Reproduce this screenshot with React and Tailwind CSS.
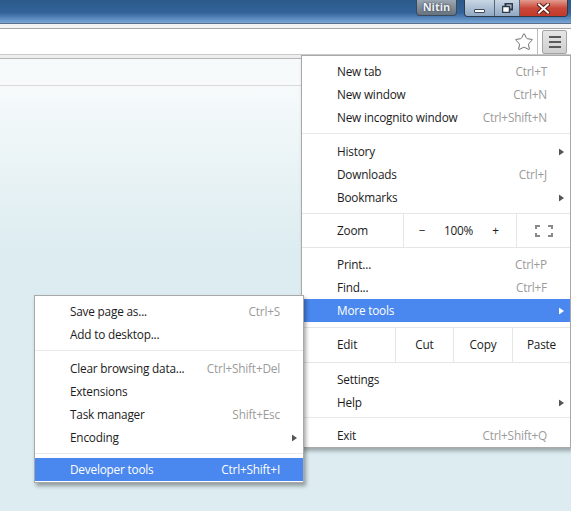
import { Star } from 'lucide-react';

const FONT = { fontFamily: '"Open Sans", "Noto Sans", sans-serif' };

function Arrow({ light }) {
  return (
    <svg width="5" height="7" viewBox="0 0 5 7" className="absolute right-[6px] top-1/2 -translate-y-1/2">
      <path d="M0 0 L5 3.5 L0 7 Z" fill={light ? '#ffffff' : '#555555'} />
    </svg>
  );
}

function Item({ label, shortcut, arrow, active }) {
  return (
    <div
      className={`relative h-[23px] flex items-center justify-between pl-[35px] pr-[23px] text-[11.8px] tracking-[-0.2px] ${
        active ? 'bg-[#4a87ee] text-white' : 'text-[#1b1b1b]'
      }`}
    >
      <span>{label}</span>
      {shortcut && <span className={active ? 'text-white' : 'text-[#9b9b9b]'}>{shortcut}</span>}
      {arrow && <Arrow light={active} />}
    </div>
  );
}

function Sep({ top = 4, bottom = 6 }) {
  return (
    <div className={`${top === 3 ? 'mt-[3px]' : 'mt-[4px]'} ${bottom === 4 ? 'mb-[4px]' : 'mb-[6px]'} h-px bg-[#e9e9e9]`} />
  );
}

function FullscreenIcon() {
  return (
    <svg width="18" height="12" viewBox="0 0 18 12" fill="none" stroke="#8a8a8a" strokeWidth="2">
      <path d="M1 4 V1 H5 M13 1 H17 V4 M17 8 V11 H13 M5 11 H1 V8" />
    </svg>
  );
}

function MainMenu() {
  return (
    <div className="absolute left-[301px] top-[55px] w-[270px] bg-white border border-[#a9a9a9] shadow-[2px_3px_4px_rgba(0,0,0,0.3)] pt-[4px]">
      <Item label="New tab" shortcut="Ctrl+T" />
      <Item label="New window" shortcut="Ctrl+N" />
      <Item label="New incognito window" shortcut="Ctrl+Shift+N" />
      <Sep />
      <Item label="History" arrow />
      <Item label="Downloads" shortcut="Ctrl+J" />
      <Item label="Bookmarks" arrow />
      <div className="mt-[4px] h-[35px] flex border-y border-[#e6e6e6] text-[11.8px] tracking-[-0.2px] text-[#1b1b1b]">
        <div className="w-[101px] pl-[35px] flex items-center">Zoom</div>
        <div className="w-[113px] border-l border-[#e6e6e6] flex items-center">
          <span className="w-[36px] text-center">−</span>
          <span className="w-[37px] text-center">100%</span>
          <span className="w-[37px] text-center">+</span>
        </div>
        <div className="flex-1 border-l border-[#e6e6e6] flex items-center justify-center">
          <FullscreenIcon />
        </div>
      </div>
      <div className="mt-[5px]" />
      <Item label="Print..." shortcut="Ctrl+P" />
      <Item label="Find..." shortcut="Ctrl+F" />
      <Item label="More tools" arrow active />
      <div className="mt-[5px] h-[36px] flex border-y border-[#e6e6e6] text-[11.8px] tracking-[-0.2px] text-[#1b1b1b]">
        <div className="w-[93px] pl-[35px] flex items-center">Edit</div>
        <div className="w-[58px] border-l border-[#e6e6e6] flex items-center justify-center">Cut</div>
        <div className="w-[59px] border-l border-[#e6e6e6] flex items-center justify-center">Copy</div>
        <div className="w-[58px] border-l border-[#e6e6e6] flex items-center justify-center">Paste</div>
      </div>
      <div className="mt-[5px]" />
      <Item label="Settings" />
      <Item label="Help" arrow />
      <Sep top={3} />
      <Item label="Exit" shortcut="Ctrl+Shift+Q" />
    </div>
  );
}

function SubMenu() {
  return (
    <div className="absolute left-[34px] top-[295px] w-[270px] bg-white border border-[#a9a9a9] shadow-[2px_3px_4px_rgba(0,0,0,0.35)] pt-[4px] pb-[1px]">
      <Item label="Save page as..." shortcut="Ctrl+S" />
      <Item label="Add to desktop..." />
      <Sep />
      <Item label="Clear browsing data..." shortcut="Ctrl+Shift+Del" />
      <Item label="Extensions" />
      <Item label="Task manager" shortcut="Shift+Esc" />
      <Item label="Encoding" arrow />
      <Sep bottom={4} />
      <Item label="Developer tools" shortcut="Ctrl+Shift+I" active />
    </div>
  );
}

function TitleBar() {
  return (
    <div className="h-[23px] bg-linear-to-b from-[#2c5a8a] via-[#33639a] via-55% to-[#79a7d8] flex justify-end items-start pr-[3px]">
      <div className="h-[16px] w-[41px] rounded-b-[4px] border border-t-0 border-[#3b4a5a] bg-linear-to-b from-[#9aa6b2] to-[#66737f] flex items-center justify-center text-[11px] font-bold text-[#eef2f6] [text-shadow:0_0_2px_#223]">
        Nitin
      </div>
      <div className="ml-[7px] h-[17px] flex rounded-b-[4px] border border-t-0 border-[#2e3b4a] overflow-hidden">
        <div className="w-[30px] bg-linear-to-b from-[#c9d6e4] to-[#90a8c2] flex items-center justify-center border-r border-[#52677d]">
          <div className="mt-[5px] w-[11px] h-[4px] bg-white border border-[#3a4a5c] rounded-[1px]" />
        </div>
        <div className="w-[25px] bg-linear-to-b from-[#c9d6e4] to-[#90a8c2] flex items-center justify-center border-r border-[#52677d]">
          <svg width="11" height="10" viewBox="0 0 11 10">
            <rect x="3.5" y="0.5" width="7" height="6" fill="none" stroke="#2e3b4a" strokeWidth="2" />
            <rect x="0.5" y="3.5" width="7" height="6" fill="#fff" stroke="#2e3b4a" strokeWidth="1.5" />
          </svg>
        </div>
        <div className="w-[47px] bg-linear-to-b from-[#e29a8e] via-[#c9483a] to-[#c2392a] flex items-center justify-center">
          <svg width="13" height="11" viewBox="0 0 13 11">
            <path d="M2 1.5 L11 9.5 M11 1.5 L2 9.5" stroke="#5a1a12" strokeWidth="4" strokeLinecap="square" />
            <path d="M2 1.5 L11 9.5 M11 1.5 L2 9.5" stroke="#ffffff" strokeWidth="2" strokeLinecap="square" />
          </svg>
        </div>
      </div>
    </div>
  );
}

export default function App() {
  return (
    <div className="relative w-[571px] h-[511px] overflow-hidden flex flex-col bg-[#dcecf0]" style={FONT}>
      <TitleBar />
      <div className="h-px bg-[#5b7189]" />
      <div className="h-[4px] bg-[#f3f3f3]" />
      <div className="h-px bg-[#a6a6a6]" />
      <div className="h-[25px] bg-white flex items-stretch">
        <div className="flex-1 border-r border-[#bdbdbd] flex items-center justify-end pr-[3px]">
          <Star size={20} strokeWidth={1.2} className="text-[#6f6f6f]" />
        </div>
        <div className="w-[33px] flex items-center justify-center">
          <div className="w-[25px] h-[24px] rounded-[2px] border border-[#a4a4a4] bg-linear-to-b from-[#e6e6e6] to-[#cfcfcf] flex flex-col items-center justify-center gap-[3px]">
            <div className="w-[12px] h-[2px] bg-[#5a5a5a]" />
            <div className="w-[12px] h-[2px] bg-[#5a5a5a]" />
            <div className="w-[12px] h-[2px] bg-[#5a5a5a]" />
          </div>
        </div>
      </div>
      <div className="h-px bg-[#cacaca]" />
      <div className="h-[3px] bg-[#eeeeee]" />
      <div className="h-px bg-[#b5b5b5]" />
      <div className="h-[26px] bg-[#f7fafb]" />
      <div className="h-px bg-[#d9d9d9]" />
      <div className="flex-1 bg-linear-to-b from-[#f6fafb] to-[#dcecf0] to-40%" />
      <MainMenu />
      <SubMenu />
    </div>
  );
}
